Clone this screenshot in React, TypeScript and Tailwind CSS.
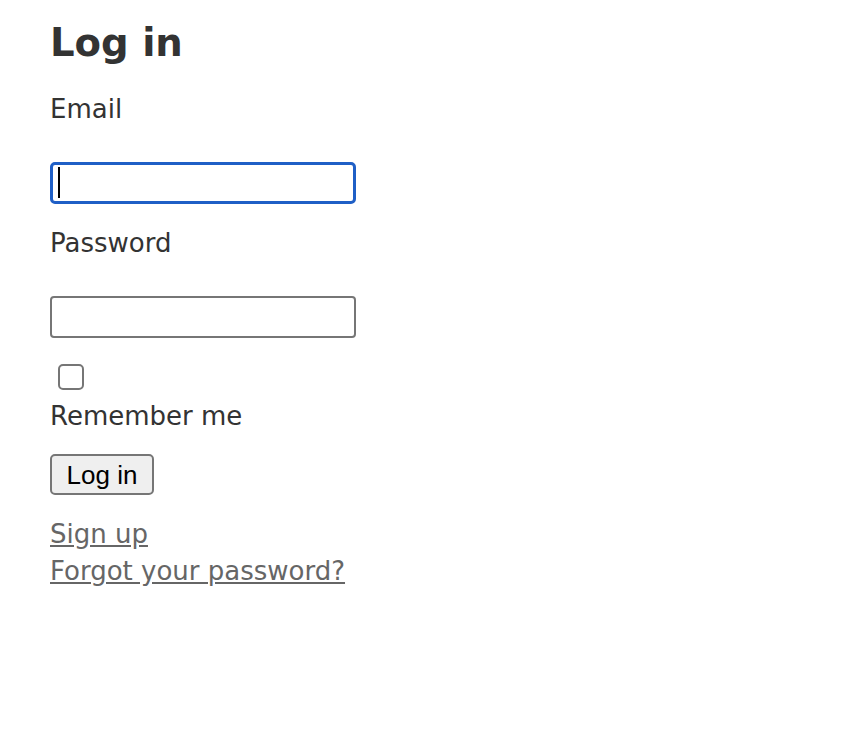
import React from 'react';

const App: React.FC = () => {
  return (
    <div className="min-h-screen bg-white pl-[50px] text-[#333] font-['DejaVu_Sans',sans-serif] text-[26px] leading-[37px]">
      <form className="flex flex-col items-start" onSubmit={(e) => e.preventDefault()}>
        {/* Heading */}
        <h1 className="mt-[21px] text-[38.6px] leading-[44px] font-bold">Log in</h1>

        {/* Email */}
        <label htmlFor="email" className="mt-[26px]">Email</label>
        <div className="relative mt-[34px]">
          <input
            id="email"
            type="email"
            className="block w-[306px] h-[42px] rounded-[5px] border-[3px] border-[#1f5fc6] bg-white outline-none"
          />
          <span className="absolute left-[8px] top-[5px] h-[31px] w-[2px] bg-black" />
        </div>

        {/* Password */}
        <label htmlFor="password" className="mt-[21px]">Password</label>
        <input
          id="password"
          type="password"
          className="mt-[34px] block w-[306px] h-[42px] rounded-[4px] border-2 border-[#767676] bg-white outline-none"
        />

        {/* Remember me */}
        <span className="mt-[26px] ml-[8px] block w-[26px] h-[26px] rounded-[5px] border-2 border-[#767676] bg-white" />
        <label className="mt-[8px]">Remember me</label>

        {/* Submit */}
        <button
          type="submit"
          className="mt-[19px] w-[104px] h-[41px] rounded-[5px] border-2 border-[#767676] bg-[#efefef] text-black font-['Liberation_Sans',sans-serif] text-[26px] leading-none"
        >
          Log in
        </button>

        {/* Links */}
        <a href="#" className="mt-[21px] text-[#666] underline">Sign up</a>
        <a href="#" className="text-[#666] underline">Forgot your password?</a>
      </form>
    </div>
  );
};

export default App;
